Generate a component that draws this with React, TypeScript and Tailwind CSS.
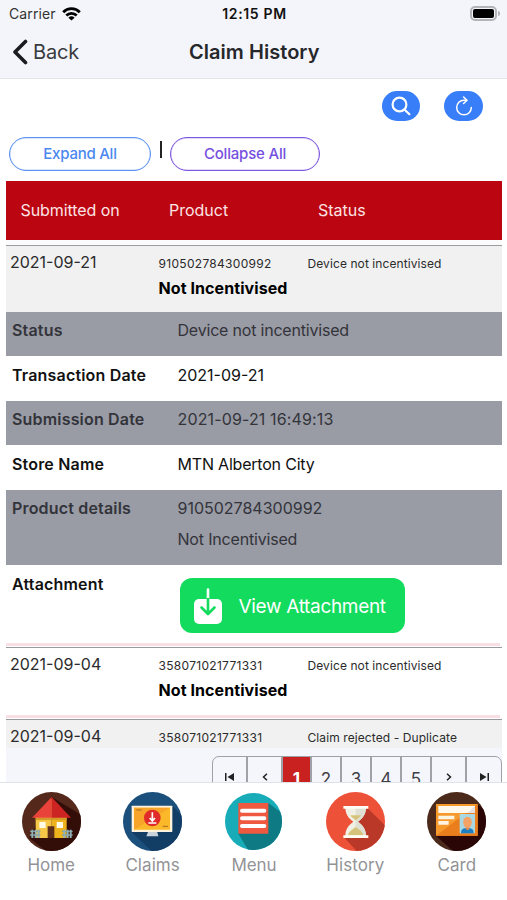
import type { ReactNode } from "react";

function StatusBar() {
  return (
    <div className="flex h-[27px] items-center justify-between pr-[7px] pl-[9px]">
      <div className="flex w-[100px] items-center gap-[6px]">
        <span className="text-[14px] tracking-[0.12px] text-[#333]">Carrier</span>
        <svg width="19" height="14" viewBox="0 0 19 14" fill="none" stroke="#000" strokeWidth="2.8">
          <path d="M1.2 5.2a11.6 11.6 0 0 1 16.6 0" />
          <path d="M4.3 8.5a7.3 7.3 0 0 1 10.4 0" />
          <path d="M9.5 13.6 6.4 10.7a4.5 4.5 0 0 1 6.2 0Z" fill="#000" stroke="none" />
        </svg>
      </div>
      <span className="text-[14px] font-semibold tracking-[0.65px] text-[#111]">12:15 PM</span>
      <div className="flex w-[100px] items-center justify-end gap-[1px]">
        <div className="h-[15px] w-[27px] rounded-[5px] border-2 border-[#b3b4b8] p-px">
          <div className="h-full rounded-[2px] bg-black" />
        </div>
        <div className="h-[5px] w-[2px] rounded-r-full bg-[#b3b4b8]" />
      </div>
    </div>
  );
}

function NavBar() {
  return (
    <div className="flex h-[49px] items-center pl-[12px]">
      <div className="flex w-[177px] items-center gap-[5px]">
        <svg width="16" height="26" viewBox="0 0 16 26" fill="none" stroke="#1b1c1f" strokeWidth="3.6" strokeLinecap="round" strokeLinejoin="round">
          <path d="M13.500 2.500 3 13l10.500 10.500" />
        </svg>
        <span className="text-[20px] leading-6 tracking-[-0.2px] text-[#3a3b3f]">Back</span>
      </div>
      <h1 className="text-[20px] leading-6 font-semibold tracking-[0.04px] text-[#26272b]">Claim History</h1>
    </div>
  );
}

function SummaryRow({ date, code, status, name, className }: { date: string; code: string; status: string; name?: string; className: string }) {
  return (
    <div className={"grid grid-cols-[148.500px_149px_1fr] pl-[4px] text-[#2b2b2b] " + className}>
      <span className="pt-[4px] text-[16px] leading-6">{date}</span>
      <div className="pt-[6px]">
        <div className="text-[12px] leading-6 tracking-[0.3px]">{code}</div>
        {name && <div className="text-[16px] leading-6 font-bold tracking-[0.08px] whitespace-nowrap text-black">{name}</div>}
      </div>
      <span className="pt-[6px] text-[12px] leading-6 tracking-[0.09px]">{status}</span>
    </div>
  );
}

function DetailRow({ label, children, className }: { label: string; children: ReactNode; className: string }) {
  return (
    <div className={"grid grid-cols-[165.500px_1fr] pl-[6px] text-[16px] leading-[31px] " + className}>
      <span className="font-semibold tracking-[0.18px]">{label}</span>
      <div>{children}</div>
    </div>
  );
}

const gray = "bg-[#999ba5] pt-[3px] text-[#33343a]";
const white = "bg-white pt-[4px] text-[#111]";

function Separator() {
  return (
    <div className="h-[5px] border-b border-[#9a9a9e] bg-white">
      <div className="mr-[2px] h-[3px] bg-[#f8dfe3]" />
    </div>
  );
}

function PageCell({ children, className }: { children: ReactNode; className: string }) {
  return <div className={"flex h-[45px] shrink-0 items-center justify-center border-r-2 border-[#9fa0a8] last:border-r-0 " + className}>{children}</div>;
}

function Paginator() {
  return (
    <div className="flex h-[34px] items-start justify-end overflow-hidden bg-[#f4f6fb] pt-[8px]">
      <div className="flex h-[46px] w-[290px] shrink-0 overflow-hidden rounded-[7px] border border-[#9fa0a8] text-[17px] text-[#3f4046]">
        <PageCell className="w-[35px] pb-[5px]">
          <svg width="9" height="8" viewBox="0 0 9 8" fill="#222"><path d="M0 0h1.500v8H0zM9 0v8L2.500 4z" /></svg>
        </PageCell>
        <PageCell className="w-[35px] pb-[5px]">
          <svg width="6" height="8" viewBox="0 0 6 8" fill="none" stroke="#222" strokeWidth="1.500"><path d="M5 .7 1.500 4 5 7.300" /></svg>
        </PageCell>
        <PageCell className="w-[29px] bg-[#c8211f] font-bold text-white">1</PageCell>
        <PageCell className="w-[30px]">2</PageCell>
        <PageCell className="w-[30px]">3</PageCell>
        <PageCell className="w-[30px]">4</PageCell>
        <PageCell className="w-[30px]">5</PageCell>
        <PageCell className="w-[35px] pb-[5px]">
          <svg width="6" height="8" viewBox="0 0 6 8" fill="none" stroke="#222" strokeWidth="1.500"><path d="M1 .7 4.500 4 1 7.300" /></svg>
        </PageCell>
        <PageCell className="w-[34px] pb-[5px]">
          <svg width="9" height="8" viewBox="0 0 9 8" fill="#222"><path d="M9 0H7.500v8H9zM0 0v8l6.500-4z" /></svg>
        </PageCell>
      </div>
    </div>
  );
}

function HomeIcon() {
  return (
    <svg width="59" height="59" viewBox="0 0 177 177">
      <clipPath id="home"><circle cx="88.500" cy="88.500" r="88.500" /></clipPath>
      <g clipPath="url(#home)">
        <rect width="177" height="177" fill="#54291b" />
        <path d="M89 15 177 68v109H72L22 138Z" fill="#330d08" />
        <path d="M89 20 41 70v68h48Z" fill="#f6c646" />
        <path d="M89 20l45 50v68H89Z" fill="#eeb21d" />
        <path d="M41 77h93v7H41z" fill="#d29a26" />
        <path d="M89 15v62H30Z" fill="#e8423a" />
        <path d="M89 15v62h58Z" fill="#cc2323" />
        <path d="M52 90h19v18H52zM104 90h19v18h-19z" fill="#fffbe5" />
        <path d="M77 103h20v35H77z" fill="#5b2d1b" />
        <path d="M24 118h31M24 129h31M120 118h32M120 129h32" stroke="#7fa0a5" strokeWidth="4" />
        <path d="M31 113v25M41 113v25M50 113v25M127 113v25M137 113v25M146 113v25" stroke="#8fb0b4" strokeWidth="6" />
      </g>
    </svg>
  );
}

function ClaimsIcon() {
  return (
    <svg width="59" height="59" viewBox="0 0 177 177">
      <clipPath id="claims"><circle cx="88.500" cy="88.500" r="88.500" /></clipPath>
      <g clipPath="url(#claims)">
        <rect width="177" height="177" fill="#1b4f7c" />
        <path d="M148 41 200 95v82H85L26 120Z" fill="#123e66" />
        <path d="M76 118h26l4 15H70Z" fill="#c9d3dc" />
        <rect x="26" y="41" width="122" height="79" rx="2" fill="#fff3dc" />
        <path d="M33 47h108v66H33z" fill="#fbb829" />
        <path d="M33 47h108L33 113Z" fill="#f6a42a" />
        <path d="M40 54h16M119 103h16" stroke="#a56b24" strokeWidth="3" />
        <circle cx="88" cy="78" r="25" fill="#df2c2a" />
        <path d="M88 61v24M80 78l8 9 8-9" fill="none" stroke="#fff" strokeWidth="5" />
        <path d="M76 93h24" stroke="#fff" strokeWidth="4" />
      </g>
    </svg>
  );
}

function MenuIcon() {
  return (
    <svg width="57" height="57" viewBox="0 0 171 171">
      <clipPath id="menu"><circle cx="85.500" cy="85.500" r="85.500" /></clipPath>
      <g clipPath="url(#menu)">
        <rect width="171" height="171" fill="#18acb8" />
        <path d="M130 30 190 75v100H72L40 122Z" fill="#0d7a84" />
        <path d="M40 30h90v92H40z" fill="#ee5940" />
        <path d="M51 53h67M51 76h67M51 99h67" stroke="#fff" strokeWidth="12" strokeLinecap="round" />
      </g>
    </svg>
  );
}

function HistoryIcon() {
  return (
    <svg width="59" height="59" viewBox="0 0 177 177">
      <clipPath id="history"><circle cx="88.500" cy="88.500" r="88.500" /></clipPath>
      <g clipPath="url(#history)">
        <rect width="177" height="177" fill="#ed5138" />
        <path d="M124 48 177 100v77H92L54 136Z" fill="#b93828" />
        <path d="M58 46h62c0 20-8 32-24 43 16 11 24 24 24 43H58c0-19 8-32 24-43-16-11-24-23-24-43Z" fill="#f1f0e5" />
        <path d="M89 46h31c0 20-8 32-24 43 16 11 24 24 24 43H89Z" fill="#dfdfd3" />
        <path d="M73 70h32c-4 6-9 10-16 15-7-5-12-9-16-15ZM66 130c3-14 12-15 23-25 11 10 20 11 23 25Z" fill="#d6c37b" />
        <path d="M52 42h75v8H52zM52 130h75v8H52z" fill="#fffdf3" />
      </g>
    </svg>
  );
}

function CardIcon() {
  return (
    <svg width="59" height="59" viewBox="0 0 177 177">
      <clipPath id="card"><circle cx="88.500" cy="88.500" r="88.500" /></clipPath>
      <g clipPath="url(#card)">
        <rect width="177" height="177" fill="#4b291b" />
        <path d="M152 36 190 70v107H78L27 131Z" fill="#2b0606" />
        <path d="M27 36h125v95H27z" fill="#f79a2d" />
        <path d="M152 36v95H27Z" fill="#ea7d1c" />
        <path d="M34 42h110v21H34z" fill="#fff8ed" />
        <path d="M122 63 144 42v21Z" fill="#e7e0e2" />
        <path d="M34 71h48v11H34zM34 87h31v11H34z" fill="#fff4e2" />
        <path d="M98 66h46v58H98z" fill="#a9d8e3" />
        <path d="M102 124c0-14 8-16 19-16s19 2 19 16Z" fill="#1c7fc4" />
        <path d="M116 101h11v10l-5 4-6-4Z" fill="#e98a4c" />
        <ellipse cx="121.500" cy="91" rx="13" ry="17" fill="#f4a266" />
      </g>
    </svg>
  );
}

const tabs: { label: string; icon: ReactNode; tracking: string }[] = [
  { label: "Home", icon: <HomeIcon />, tracking: "tracking-[0px]" },
  { label: "Claims", icon: <ClaimsIcon />, tracking: "tracking-[0.05px]" },
  { label: "Menu", icon: <MenuIcon />, tracking: "tracking-[-0.1px]" },
  { label: "History", icon: <HistoryIcon />, tracking: "tracking-[0.1px]" },
  { label: "Card", icon: <CardIcon />, tracking: "tracking-[0px]" },
];

export default function App() {
  return (
    <div className="flex h-[900px] w-[507px] flex-col overflow-hidden bg-white font-['Inter',sans-serif]">
      <header className="h-[79px] shrink-0 border-b border-[#e3e5e9] bg-[#f4f5fa]">
        <StatusBar />
        <NavBar />
      </header>

      <main className="flex h-[703px] shrink-0 flex-col overflow-hidden pr-[5px] pl-[6px]">
        <div className="flex justify-end gap-[24px] pt-[12px] pr-[19px]">
          <button className="flex h-[30px] w-[38px] items-center justify-center rounded-full bg-[#387ef8]">
            <svg width="20" height="20" viewBox="0 0 20 20" fill="none" stroke="#fff" strokeWidth="2.200" strokeLinecap="round">
              <circle cx="8.500" cy="8.500" r="6.900" />
              <path d="m13.700 13.700 4.700 4.500" />
            </svg>
          </button>
          <button className="flex h-[30px] w-[39px] items-center justify-center rounded-full bg-[#387ef8]">
            <svg width="18" height="20" viewBox="0 0 18 20" fill="none" stroke="#fff" strokeWidth="1.500" strokeLinecap="round" strokeLinejoin="round">
              <path d="M11.600 4.200H9a7.300 7.300 0 1 0 7.300 7.300" />
              <path d="m8.600 1 3.400 3.200-3.400 3.300" />
            </svg>
          </button>
        </div>

        <div className="mt-[16px] flex h-[34px] items-center pl-[3px] text-[15px] font-medium">
          <button className="h-[34px] w-[142px] rounded-full border border-[#5b92f4] pt-[1px] tracking-[-0.25px] text-[#4b88f0] ring-[0.500px] ring-[#6c9df5]/50 ring-inset">Expand All</button>
          <span className="mr-[8px] ml-[9px] mb-[9px] h-[17px] w-[2px] bg-[#222]" />
          <button className="h-[34px] w-[150px] rounded-full border border-[#7f58e0] pt-[1px] tracking-[-0.2px] text-[#764fe0] ring-[0.500px] ring-[#8a66e2]/50 ring-inset">Collapse All</button>
        </div>

        <div className="mt-[10px] grid h-[59px] shrink-0 grid-cols-[148.500px_149px_1fr] items-center bg-[#bb0510] pb-[2px] pl-[14.500px] text-[16px] text-[#fbe3e4]">
          <span className="tracking-[-0.08px]">Submitted on</span>
          <span>Product</span>
          <span>Status</span>
        </div>
        <div className="h-[6px] shrink-0 border-b border-[#9c9da3] bg-[#fbfbfc]" />

        <SummaryRow date="2021-09-21" code="910502784300992" name="Not Incentivised" status="Device not incentivised" className="h-[66px] shrink-0 bg-[#f1f1f1]" />

        <DetailRow label="Status" className={"h-[44px] shrink-0 " + gray}>
          <span className="tracking-[-0.2px]">Device not incentivised</span>
        </DetailRow>
        <DetailRow label="Transaction Date" className={"h-[45px] shrink-0 " + white}>2021-09-21</DetailRow>
        <DetailRow label="Submission Date" className={"h-[44px] shrink-0 " + gray}>
          <span className="tracking-[0.14px]">2021-09-21 16:49:13</span>
        </DetailRow>
        <DetailRow label="Store Name" className={"h-[45px] shrink-0 " + white}>
          <span className="tracking-[-0.2px]">MTN Alberton City</span>
        </DetailRow>
        <DetailRow label="Product details" className={"h-[75px] shrink-0 " + gray}>
          <div>910502784300992</div>
          <div className="tracking-[-0.18px]">Not Incentivised</div>
        </DetailRow>
        <DetailRow label="Attachment" className={"h-[78px] shrink-0 " + white}>
          <button className="mt-[9px] ml-[2px] flex h-[55px] w-[225px] items-center rounded-[12px] bg-[#12db5d] pl-[14px] text-white">
            <svg width="28" height="36" viewBox="0 0 28 36" fill="none">
              <rect y="11" width="28" height="25" rx="5" fill="#fff" />
              <path d="M14 1.500V11" stroke="#fff" strokeWidth="2.600" strokeLinecap="round" />
              <path d="M14 11v14M7.500 19.500 14 26l6.500-6.500" stroke="#12db5d" strokeWidth="2.600" strokeLinecap="round" strokeLinejoin="round" />
            </svg>
            <span className="ml-[17px] pt-[2px] text-[19px] tracking-[-0.32px] whitespace-nowrap">View Attachment</span>
          </button>
        </DetailRow>

        <Separator />
        <SummaryRow date="2021-09-04" code="358071021771331" name="Not Incentivised" status="Device not incentivised" className="h-[67px] shrink-0 bg-white" />
        <Separator />
        <SummaryRow date="2021-09-04" code="358071021771331" status="Claim rejected - Duplicate" className="h-[28px] shrink-0 bg-[#f1f1f1]" />
        <Paginator />
      </main>

      <nav className="grid h-[118px] shrink-0 grid-cols-5 border-t border-[#dfe2e6] bg-white">
        {tabs.map((tab) => (
          <div key={tab.label} className="flex flex-col items-center pt-[9px] pl-[1px]">
            <div className="flex h-[59px] items-center">{tab.icon}</div>
            <span className={"mt-[2px] text-[17px] leading-6 text-[#939397] " + tab.tracking}>{tab.label}</span>
          </div>
        ))}
      </nav>
    </div>
  );
}
